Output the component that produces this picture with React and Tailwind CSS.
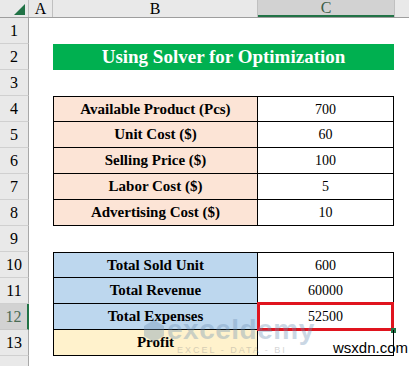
import React from "react";

const rows1 = [
  ["Available Product (Pcs)", "700"],
  ["Unit Cost ($)", "60"],
  ["Selling Price ($)", "100"],
  ["Labor Cost ($)", "5"],
  ["Advertising Cost ($)", "10"],
];

const rows2 = [
  ["Total Sold Unit", "600", "bg-[#bdd7ee]"],
  ["Total Revenue", "60000", "bg-[#bdd7ee]"],
  ["Total Expenses", "52500", "bg-[#bdd7ee]"],
  ["Profit", "", "bg-[#fff2cc]"],
];

const RowHead = ({ n, active }) => (
  <div
    className={
      active
        ? "w-[29px] shrink-0 h-[26px] flex items-center justify-center bg-[#d2d2d2] text-[#4a6b55] border-b border-[#c8c8c8] border-r-2 border-r-[#217346] text-[16px]"
        : "w-[29px] shrink-0 h-[26px] flex items-center justify-center bg-[#e9e9e9] text-black border-b border-[#d0d0d0] border-r border-r-[#a8a8a8] text-[16px]"
    }
  >
    {n}
  </div>
);

const TableRow = ({ n, label, value, bg, first, selected }) => (
  <div className="flex h-[26px]">
    <RowHead n={n} active={selected} />
    <div className="w-[24px] shrink-0" />
    <div
      className={`w-[205px] shrink-0 flex items-center justify-center border-l border-r border-b border-black font-bold text-[15px] ${bg} ${first ? "border-t" : ""}`}
    >
      {label}
    </div>
    <div
      className={`relative w-[136px] shrink-0 flex items-center justify-center border-r border-b border-black text-[14px] ${first ? "border-t" : ""}`}
    >
      {value}
      {selected && (
        <>
          <div className="absolute -top-[2px] -left-[1px] -right-[1px] -bottom-[2px] border-[3px] border-[#e0141e]" />
          <div className="absolute -right-[3px] -bottom-[4px] w-[5px] h-[5px] bg-[#217346]" />
        </>
      )}
    </div>
  </div>
);

const BlankRow = ({ n, children }) => (
  <div className="flex h-[26px]">
    <RowHead n={n} />
    <div className="w-[24px] shrink-0" />
    {children}
  </div>
);

export default function App() {
  return (
    <div className="relative w-[409px] h-[366px] overflow-hidden bg-white text-black font-['Liberation_Serif','Times_New_Roman',serif]">
      <div className="flex h-[18px] bg-[#e9e9e9] border-b border-[#9e9e9e] text-[16px]">
        <div className="relative w-[29px] shrink-0 border-r border-[#c0c0c0]">
          <svg className="absolute left-[14px] top-[4px]" width="11" height="11" viewBox="0 0 11 11">
            <polygon points="11,0 11,11 0,11" fill="#217346" />
          </svg>
        </div>
        <div className="w-[24px] shrink-0 flex items-center justify-center border-r border-[#c0c0c0]">A</div>
        <div className="w-[205px] shrink-0 flex items-center justify-center border-r border-[#c0c0c0]">B</div>
        <div className="w-[136px] shrink-0 flex items-center justify-center bg-[#d2d2d2] border-b-2 border-[#217346] text-[#3d5e47]">
          C
        </div>
        <div className="flex-1 border-l border-[#c0c0c0]" />
      </div>

      <BlankRow n={1} />
      <BlankRow n={2}>
        <div className="w-[341px] shrink-0 flex items-center justify-center bg-[#00b050] text-white font-bold text-[19px]">
          Using Solver for Optimization
        </div>
      </BlankRow>
      <BlankRow n={3} />
      {rows1.map(([label, value], i) => (
        <TableRow key={label} n={4 + i} label={label} value={value} bg="bg-[#fce4d6]" first={i === 0} />
      ))}
      <BlankRow n={9} />
      {rows2.map(([label, value, bg], i) => (
        <TableRow key={label} n={10 + i} label={label} value={value} bg={bg} first={i === 0} selected={i === 2} />
      ))}
      <div className="flex h-[10px]">
        <div className="w-[29px] shrink-0 bg-[#e9e9e9] border-r border-[#a8a8a8]" />
      </div>

      <div className="absolute left-[143px] top-[316px] flex items-start opacity-35 pointer-events-none font-['Liberation_Sans',Arial,sans-serif]">
        <svg width="22" height="24" viewBox="0 0 22 24" className="mt-[3px]">
          <path d="M11 1 L21 7 L21 17 L11 23 L1 17 L1 7 Z" fill="#6b8fb5" />
        </svg>
        <div className="ml-[2px] flex flex-col leading-none">
          <span className="text-[28px] font-bold text-[#6b8fb5] tracking-[0.5px]">exceldemy</span>
          <span className="text-[9px] text-[#8a8a8a] tracking-[2px] mt-[2px] ml-[10px]">EXCEL - DATA - BI</span>
        </div>
      </div>

      <div className="absolute left-[333px] top-[340px] text-[15px] text-black leading-none font-['Liberation_Sans',Arial,sans-serif]">
        wsxdn.com
      </div>
    </div>
  );
}
